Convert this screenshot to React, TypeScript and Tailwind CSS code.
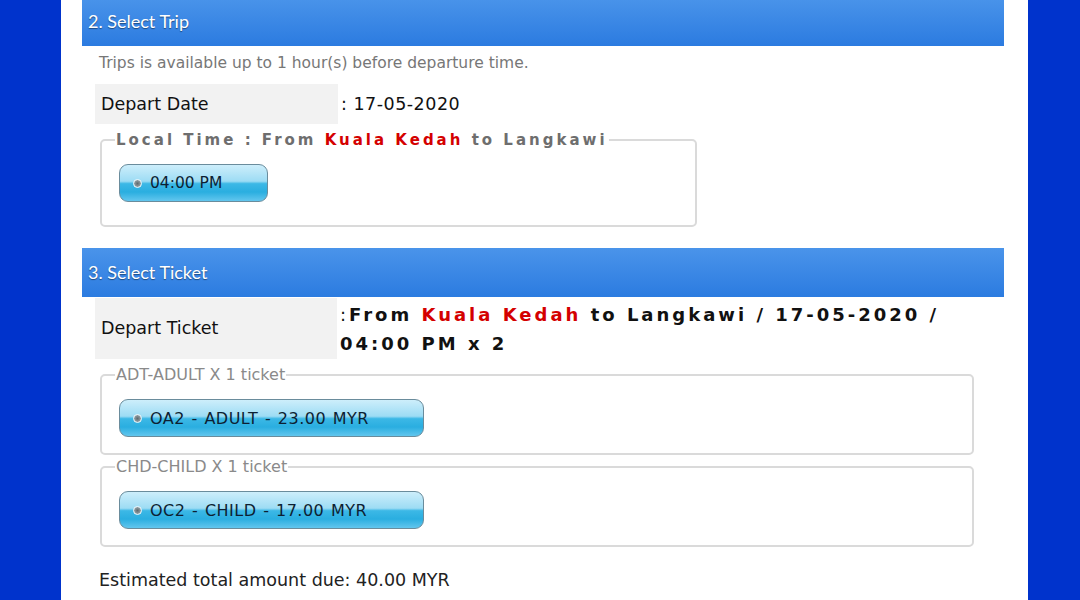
export default function App() {
  return (
    <div className="h-[600px] w-[1080px] overflow-hidden bg-[#0033cc]">
      <div className="flow-root w-[967px] ml-[61px] h-full bg-white pl-[21px] pr-[24px] font-['DejaVu_Sans',sans-serif]">
        <SectionHeader title="2. Select Trip" first />
        <p className="ml-[17px] mt-[7px] text-[15.5px] text-[#777] leading-[20px]">
          Trips is available up to 1 hour(s) before departure time.
        </p>

        <div className="mt-[11px] ml-[13px] flex">
          <div className="w-[243px] h-[40px] bg-[#f2f2f2] flex items-center px-[6px] text-[17.5px] text-[#111]">
            Depart Date
          </div>
          <div className="flex items-center ml-[3px] text-[17.5px] text-[#111] tracking-[0.5px]">: 17-05-2020</div>
        </div>

        <fieldset className="mt-[7px] ml-[18px] w-[597px] h-[96px] border-2 border-[#dadada] rounded-[5px] px-[17px] pt-[15px]">
          <legend className="px-[1px] ml-[-4px] text-[15px] font-bold tracking-[3px] text-[#6e6e6e] leading-[18px]">
            Local Time : From <span className="text-[#d40000]">Kuala Kedah</span> to Langkawi
          </legend>
          <GlossButton label="04:00 PM" width="w-[149px]" />
        </fieldset>

        <div className="mt-[21px]">
          <SectionHeader title="3. Select Ticket" />
        </div>

        <div className="mt-[1px] ml-[13px] flex">
          <div className="w-[242px] h-[61px] bg-[#f2f2f2] flex items-center px-[6px] text-[17.5px] text-[#111]">
            Depart Ticket
          </div>
          <div className="ml-[3px] pt-[2px] text-[18px] font-bold tracking-[3px] leading-[29px] text-[#111]">
            <span className="font-normal tracking-normal mr-[3px]">:</span>From <span className="text-[#d40000]">Kuala Kedah</span> to Langkawi / 17-05-2020 /
            <br />
            04:00 PM x 2
          </div>
        </div>

        <TicketGroup legend="ADT-ADULT X 1 ticket" label="OA2 - ADULT - 23.00 MYR" className="mt-[7px]" />
        <TicketGroup legend="CHD-CHILD X 1 ticket" label="OC2 - CHILD - 17.00 MYR" className="mt-[3px]" />

        <p className="ml-[17px] mt-[21px] text-[17.5px] leading-[24px] text-[#222]">Estimated total amount due: 40.00 MYR</p>
      </div>
    </div>
  );
}

function SectionHeader({ title, first }: { title: string; first?: boolean }) {
  return (
    <div
      className={`${first ? "mt-[-3px]" : ""} h-[49px] bg-gradient-to-b from-[#4a94ea] to-[#2b7be0] flex items-center px-[6px] font-['Lato',sans-serif] text-[18px] text-white [text-shadow:0_1px_1px_rgba(0,0,0,0.45)]`}
    >
      {title}
    </div>
  );
}

function TicketGroup({ legend, label, className }: { legend: string; label: string; className: string }) {
  return (
    <fieldset className={`${className} ml-[18px] w-[874px] h-[89px] border-2 border-[#dadada] rounded-[5px] px-[17px] pt-[15px]`}>
      <legend className="px-[1px] ml-[-4px] text-[16px] text-[#8a8a8a] leading-[18px]">{legend}</legend>
      <GlossButton label={label} width="w-[305px]" wide />
    </fieldset>
  );
}

function GlossButton({ label, width, wide }: { label: string; width: string; wide?: boolean }) {
  return (
    <div
      className={`${width} h-[38px] rounded-[9px] border border-[#6a8c9c] flex items-center pl-[13px] bg-[linear-gradient(to_bottom,#cdeefb_0%,#9ddcf4_45%,#3cb8e6_52%,#2aaee0_75%,#62c6ee_100%)]`}
    >
      <span className="w-[9px] h-[9px] rounded-full border border-[#eef8fc] bg-[radial-gradient(circle_at_50%_50%,#5f6b70_0%,#8d999e_60%,#c9d6db_100%)] mr-[8px]" />
      <span className={`${wide ? "text-[16px] tracking-[0.5px] [word-spacing:1px]" : "text-[15.5px]"} pt-[2px] text-[#0d1f33]`}>{label}</span>
    </div>
  );
}
